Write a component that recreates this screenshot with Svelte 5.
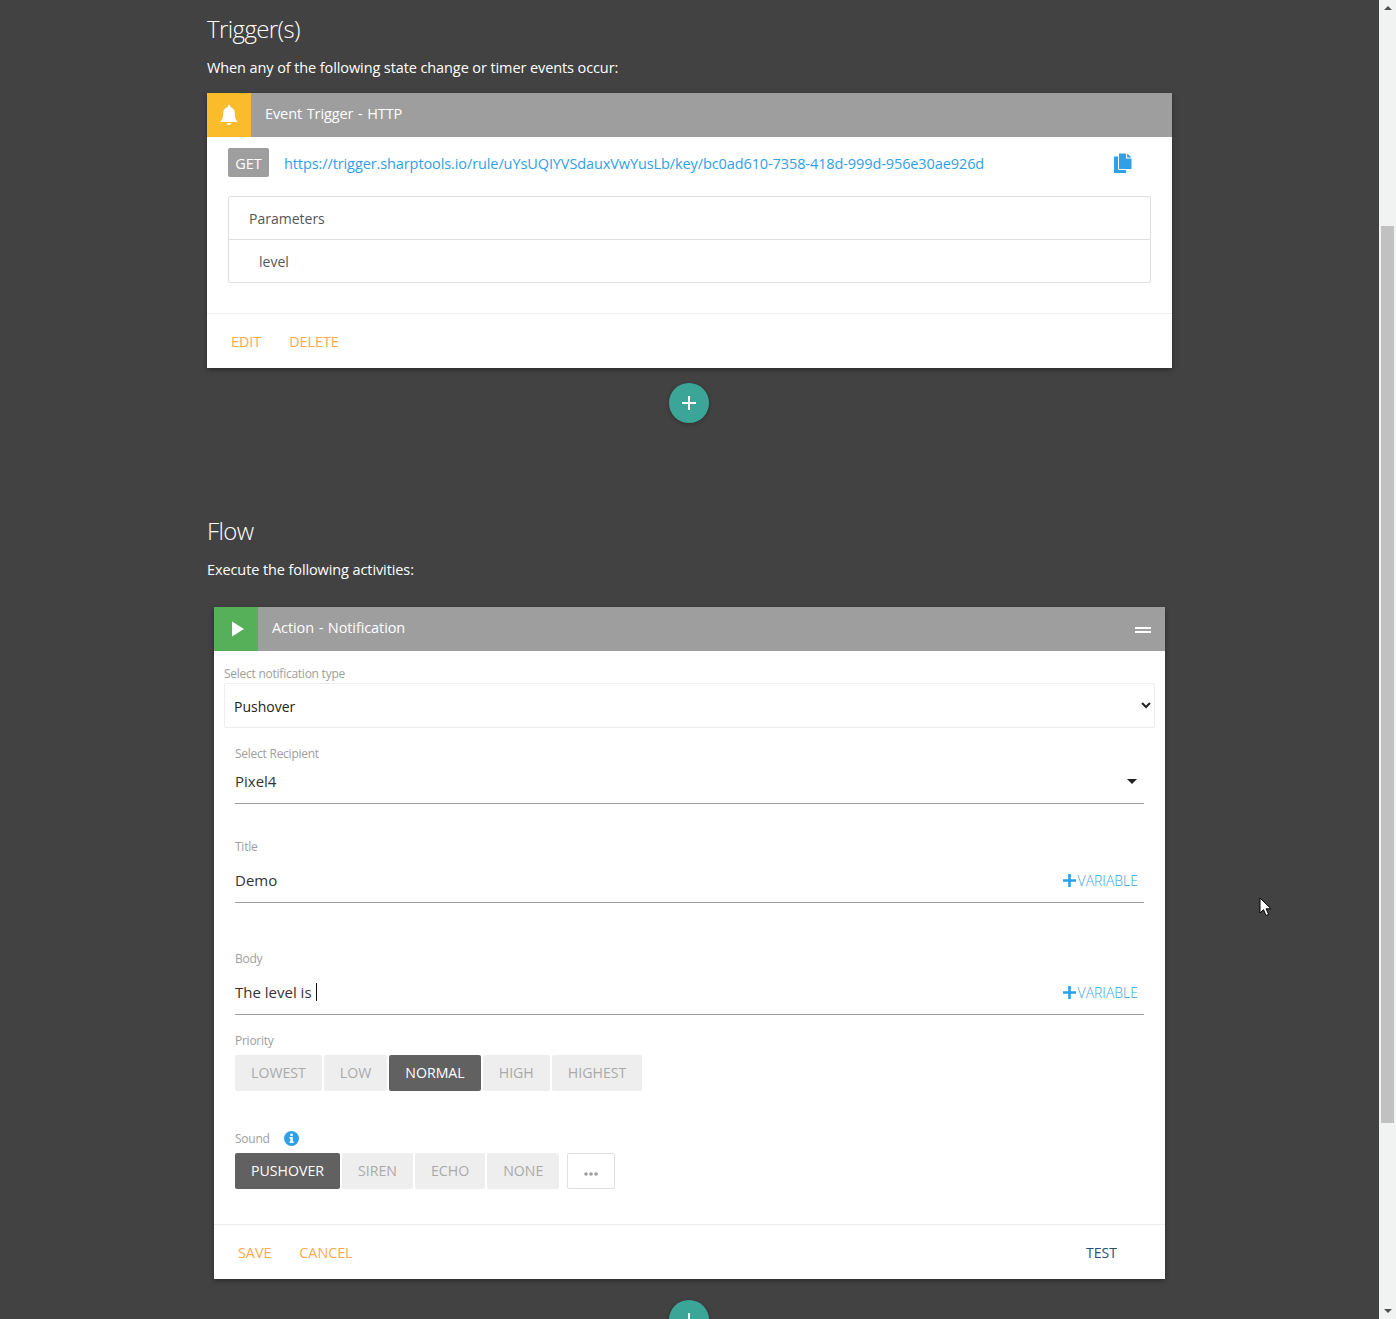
<script>
  // Rule editor: trigger card and notification action card
  const priorities = ['LOWEST', 'LOW', 'NORMAL', 'HIGH', 'HIGHEST'];
  const sounds = ['PUSHOVER', 'SIREN', 'ECHO', 'NONE'];

  let priority = $state('NORMAL');
  let sound = $state('PUSHOVER');
</script>

<div class="window">
  <main class="page">
    <div class="container">
      <h2 class="first">Trigger(s)</h2>
      <p class="lead">When any of the following state change or timer events occur:</p>

      <section class="card trigger">
        <header class="head">
          <span class="badge yellow">
            <svg width="18" height="21" viewBox="0 0 18 21"><path fill="#fff" d="M9 0c.8 0 1.3.5 1.3 1.2v.9C13 2.800 14.800 5 14.800 8c0 5 1 7 3.200 9H0c2.200-2 3.200-4 3.200-9C3.200 5 5 2.800 7.700 2.100v-.9C7.700.5 8.200 0 9 0zM6.700 18h4.600c-.2 1.200-1.200 2-2.300 2s-2.100-.8-2.300-2z"/></svg>
          </span>
          <span class="head-title">Event Trigger - HTTP</span>
        </header>
        <div class="trigger-body">
          <div class="url-row">
            <span class="get">GET</span>
            <a class="url" href="#top">https://trigger.sharptools.io/rule/uYsUQIYVSdauxVwYusLb/key/bc0ad610-7358-418d-999d-956e30ae926d</a>
            <svg class="copy" width="18" height="20" viewBox="0 0 18 20"><path fill="#2f9fe8" d="M5 3.500H0V20h12v-3H5.500C4.700 17 4 16.300 4 15.500V4.500C4 4 4.400 3.500 5 3.500z"/><path fill="#2f9fe8" d="M5 .5h7v5h5.500v10.500H5z"/><path fill="#2f9fe8" d="M13.200.5l4.300 4h-4.300z"/></svg>
          </div>
          <div class="params">
            <div class="params-head">Parameters</div>
            <div class="params-row">level</div>
          </div>
        </div>
        <footer class="foot">
          <a class="link" href="#top">EDIT</a>
          <a class="link" href="#top">DELETE</a>
        </footer>
      </section>

      <button class="fab" aria-label="Add trigger">
        <svg width="16" height="16" viewBox="0 0 16 16"><path fill="#fff" d="M7 1h2v6h6v2H9v6H7V9H1V7h6z"/></svg>
      </button>

      <h2 class="flow">Flow</h2>
      <p class="lead">Execute the following activities:</p>

      <section class="card action">
        <header class="head">
          <span class="badge green">
            <svg class="play" width="14" height="16" viewBox="0 0 14 16"><path fill="#fff" d="M1 .5L13 8 1 15.500z"/></svg>
          </span>
          <span class="head-title">Action - Notification</span>
          <span class="collapse"></span>
        </header>

        <div class="type-field">
          <span class="label">Select notification type</span>
          <select class="native">
            <option>Pushover</option>
          </select>
        </div>

        <div class="fields">
          <div class="field recipient">
            <span class="label">Select Recipient</span>
            <div class="line-value">
              <span>Pixel4</span>
              <span class="caret-down"></span>
            </div>
          </div>

          <div class="field title-field">
            <span class="label">Title</span>
            <div class="line-value">
              <span>Demo</span>
              <a class="variable" href="#top"><svg width="13" height="13" viewBox="0 0 13 13"><path fill="#2f9fe8" d="M5.200 0h2.600v5.200H13v2.600H7.800V13H5.200V7.800H0V5.200h5.200z"/></svg>VARIABLE</a>
            </div>
          </div>

          <div class="field body-field">
            <span class="label">Body</span>
            <div class="line-value">
              <span class="typed">The level is<i class="text-caret"></i></span>
              <a class="variable" href="#top"><svg width="13" height="13" viewBox="0 0 13 13"><path fill="#2f9fe8" d="M5.200 0h2.600v5.200H13v2.600H7.800V13H5.200V7.800H0V5.200h5.200z"/></svg>VARIABLE</a>
            </div>
          </div>

          <div class="group priority">
            <span class="label">Priority</span>
            <div class="buttons">
              {#each priorities as p}
                <button class="opt" class:active={priority === p} onclick={() => (priority = p)}>{p}</button>
              {/each}
            </div>
          </div>

          <div class="group sound">
            <span class="label sound-label">Sound
              <svg width="15" height="15" viewBox="0 0 15 15"><circle cx="7.500" cy="7.500" r="7.500" fill="#2f9fe8"/><path fill="#fff" d="M6.300 2.800h2.500v2.100H6.300zM5.600 6h3.200v4.300h.8v1.700H5.600v-1.700h.8V7.700h-.8z"/></svg>
            </span>
            <div class="buttons">
              {#each sounds as s}
                <button class="opt" class:active={sound === s} onclick={() => (sound = s)}>{s}</button>
              {/each}
              <button class="more" aria-label="More sounds">
                <svg width="14" height="4" viewBox="0 0 14 4"><circle cx="2" cy="2" r="1.800" fill="#9e9e9e"/><circle cx="7" cy="2" r="1.800" fill="#9e9e9e"/><circle cx="12" cy="2" r="1.800" fill="#9e9e9e"/></svg>
              </button>
            </div>
          </div>
        </div>

        <footer class="foot action-foot">
          <a class="link" href="#top">SAVE</a>
          <a class="link" href="#top">CANCEL</a>
          <a class="test" href="#top">TEST</a>
        </footer>
      </section>

      <button class="fab last" aria-label="Add action">
        <svg width="16" height="16" viewBox="0 0 16 16"><path fill="#fff" d="M7 1h2v6h6v2H9v6H7V9H1V7h6z"/></svg>
      </button>
    </div>

    <svg class="pointer" width="13" height="20" viewBox="0 0 13 20"><path fill="#fff" stroke="#000" stroke-width="1" d="M1 1v15l3.500-3.300 2.500 5.800 2.600-1.100-2.500-5.600H12z"/></svg>
  </main>

  <aside class="scrollbar">
    <span class="arrow up"></span>
    <span class="thumb"></span>
    <span class="arrow down"></span>
  </aside>
</div>

<style>
  :global(body) {
    margin: 0;
    background: #424242;
  }

  .window {
    display: flex;
    height: 1319px;
    overflow: hidden;
    font-family: "Open Sans", "Liberation Sans", sans-serif;
    font-size: 14.5px;
    color: #555;
  }

  .page {
    position: relative;
    flex: 1;
    min-width: 0;
    background: #424242;
  }

  .container {
    width: 965px;
    margin: 0 auto;
    color: #fff;
  }

  h2 {
    margin: 0;
    font-size: 24px;
    font-weight: 300;
    line-height: 32px;
    letter-spacing: -0.6px;
  }
  h2.first { padding-top: 13px; }
  h2.flow { margin-top: 92px; }

  .lead {
    margin: 12px 0 0;
    font-size: 14.5px;
    line-height: 22px;
    letter-spacing: -0.1px;
    color: #fff;
  }

  .card {
    background: #fff;
    color: #555;
    box-shadow: 0 2px 5px rgba(0, 0, 0, 0.35);
  }
  .trigger { margin-top: 14px; }
  .action { margin: 26px 7px 0; }

  .head {
    display: flex;
    align-items: center;
    height: 44px;
    background: #9e9e9e;
    color: #fff;
  }
  .badge {
    display: flex;
    align-items: center;
    justify-content: center;
    width: 44px;
    height: 44px;
  }
  .yellow { background: #fbbc2c; }
  .green { background: #55b059; }
  .play { margin-left: 3px; margin-top: -1px; }
  .head-title {
    margin-left: 14px;
    margin-top: -4px;
    font-size: 14.5px;
    letter-spacing: -0.1px;
    word-spacing: 1px;
  }
  .collapse {
    width: 16px;
    height: 2px;
    margin: 2px 14px 0 auto;
    border-top: 2px solid #fff;
    border-bottom: 2px solid #fff;
  }

  .trigger-body { padding: 11px 21px 30px; }
  .url-row {
    display: flex;
    align-items: center;
    height: 29px;
  }
  .get {
    width: 41px;
    height: 29px;
    line-height: 31px;
    text-align: center;
    border-radius: 2px;
    background: #9e9e9e;
    color: #fff;
    font-size: 14.5px;
  }
  .url {
    margin-left: 15px;
    padding-top: 2px;
    color: #2f9fe8;
    text-decoration: none;
    letter-spacing: -0.1px;
  }
  .copy { margin: 0 19px 0 auto; }

  .params {
    margin-top: 19px;
    width: 921px;
    border: 1px solid #e0e0e0;
    border-radius: 2px;
  }
  .params-head {
    height: 42px;
    line-height: 43px;
    padding-left: 20px;
    border-bottom: 1px solid #e0e0e0;
    font-size: 14px;
    font-weight: 500;
  }
  .params-row {
    height: 42px;
    line-height: 43px;
    padding-left: 30px;
    font-size: 14px;
  }

  .foot {
    display: flex;
    align-items: center;
    gap: 28px;
    height: 54px;
    padding-left: 24px;
    border-top: 1px solid #eee;
  }
  .link {
    color: #ffa94d;
    text-decoration: none;
    font-size: 14.3px;
  }
  .test {
    margin-left: auto;
    margin-right: 48px;
    color: #2a4d7c;
    text-decoration: none;
    font-size: 14px;
  }

  .fab {
    display: flex;
    align-items: center;
    justify-content: center;
    width: 40px;
    height: 40px;
    margin: 15px 0 0 462px;
    padding: 0;
    border: 0;
    border-radius: 50%;
    background: #3ba697;
    box-shadow: 0 1px 4px rgba(0, 0, 0, 0.3);
  }
  .fab.last { margin-top: 21px; }

  .label {
    display: block;
    font-size: 12px;
    line-height: 16px;
    color: #9e9e9e;
    letter-spacing: -0.25px;
  }

  .type-field { padding: 15px 10px 0; }
  .native {
    display: block;
    box-sizing: border-box;
    width: 100%;
    height: 45px;
    margin-top: 1px;
    padding: 2px 5px 0;
    background: #fff;
    border: 1px solid #eee;
    border-radius: 2px;
    font: inherit;
    font-size: 14px;
    color: #222;
  }

  .fields { padding: 18px 21px 35px; }
  .line-value {
    display: flex;
    align-items: center;
    justify-content: space-between;
    border-bottom: 1px solid #9e9e9e;
    font-size: 15px;
    color: #333;
  }
  .recipient .line-value { height: 42px; padding-bottom: 4px; box-sizing: border-box; }
  .title-field { margin-top: 35px; }
  .title-field .line-value { height: 45px; padding-top: 2px; }
  .body-field { margin-top: 48px; }
  .body-field .line-value { height: 45px; padding-top: 2px; }

  .caret-down {
    width: 0;
    height: 0;
    margin: 2px 7px 0 0;
    border-left: 5px solid transparent;
    border-right: 5px solid transparent;
    border-top: 5px solid #222;
  }
  .typed { display: inline-flex; align-items: center; }
  .text-caret {
    display: inline-block;
    width: 1px;
    height: 18px;
    margin-left: 4px;
    background: #111;
  }
  .variable {
    display: inline-flex;
    align-items: center;
    gap: 2px;
    margin: 2px 6px 0 0;
    color: #2f9fe8;
    text-decoration: none;
    font-size: 14px;
    font-weight: 300;
  }

  .priority { margin-top: 18px; }
  .sound { margin-top: 40px; }
  .sound-label {
    display: flex;
    align-items: center;
    gap: 14px;
  }
  .sound-label svg { margin-top: -2px; }
  .buttons {
    display: flex;
    gap: 2px;
    margin-top: 6px;
  }
  .opt {
    height: 36px;
    padding: 0 16px 1px;
    border: 0;
    border-radius: 2px;
    background: #eee;
    color: #aaa;
    font: inherit;
    font-size: 14.15px;
  }
  .opt.active {
    background: #616161;
    color: #fff;
  }
  .more {
    width: 48px;
    height: 36px;
    margin-left: 6px;
    padding: 0;
    border: 1px solid #e0e0e0;
    border-radius: 2px;
    background: #fff;
  }

  .pointer {
    position: absolute;
    left: 1259px;
    top: 897px;
  }

  .scrollbar {
    position: relative;
    flex: none;
    width: 17px;
    background: #f1f3f2;
  }
  .thumb {
    position: absolute;
    top: 226px;
    left: 2px;
    width: 13px;
    height: 897px;
    background: #c1c1c1;
  }
  .arrow {
    position: absolute;
    left: 5px;
    width: 0;
    height: 0;
    border-left: 4px solid transparent;
    border-right: 4px solid transparent;
  }
  .arrow.up { top: 6px; border-bottom: 4px solid #505050; }
  .arrow.down { bottom: 6px; border-top: 4px solid #505050; }
</style>
